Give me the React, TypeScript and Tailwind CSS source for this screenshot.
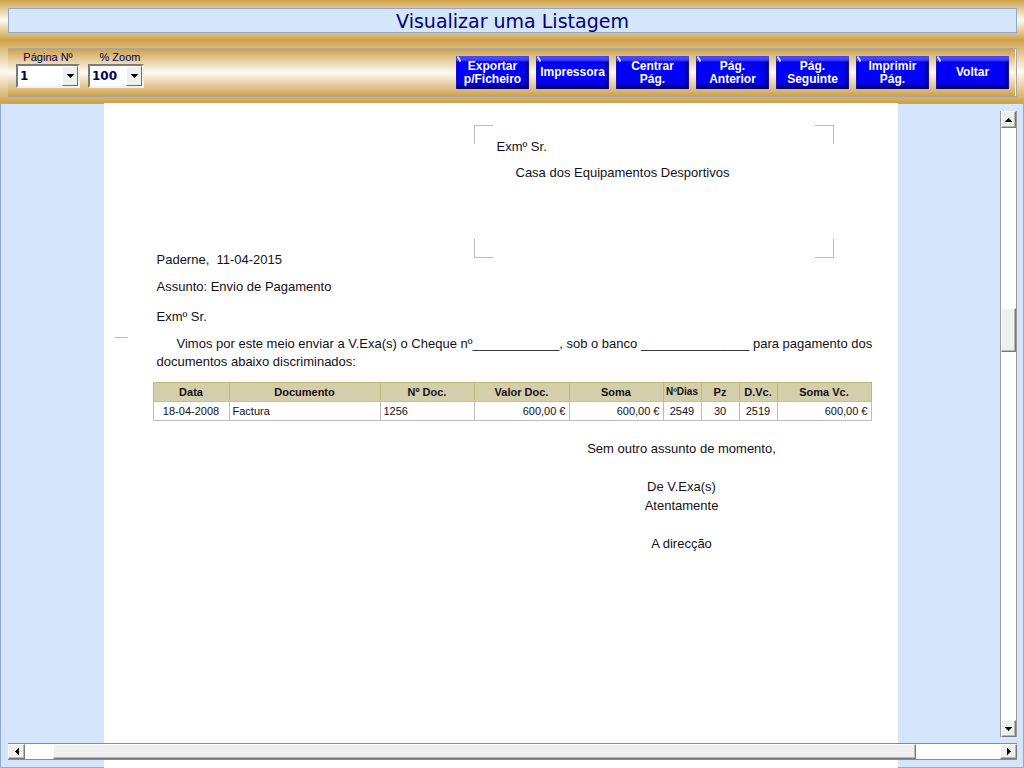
import { useState } from "react";
import clsx from "clsx";

type ToolbarAction = {
  id: string;
  lines: string[];
};

const ACTIONS: ToolbarAction[] = [
  { id: "export", lines: ["Exportar", "p/Ficheiro"] },
  { id: "printer", lines: ["Impressora"] },
  { id: "center", lines: ["Centrar", "Pág."] },
  { id: "previous", lines: ["Pág.", "Anterior"] },
  { id: "next", lines: ["Pág.", "Seguinte"] },
  { id: "print", lines: ["Imprimir", "Pág."] },
  { id: "back", lines: ["Voltar"] },
];

const COLUMNS = [
  { label: "Data", width: "w-[76px]", align: "text-center" },
  { label: "Documento", width: "w-[151px]", align: "text-left" },
  { label: "Nº Doc.", width: "w-[94px]", align: "text-left" },
  { label: "Valor Doc.", width: "w-[95px]", align: "text-right" },
  { label: "Soma", width: "w-[94px]", align: "text-right" },
  { label: "NºDias", width: "w-[38px]", align: "text-center", small: true },
  { label: "Pz", width: "w-[38px]", align: "text-center" },
  { label: "D.Vc.", width: "w-[38px]", align: "text-center" },
  { label: "Soma Vc.", width: "w-[94px]", align: "text-right" },
];

const ROWS = [
  ["18-04-2008", "Factura", "1256", "600,00 €", "600,00 €", "2549", "30", "2519", "600,00 €"],
];

const ARROWS = {
  up: "M4 0h1v1h1v1h1v1h1v1H1V3h1V2h1V1h1z",
  down: "M1 0h7v1H7v1H6v1H5v1H4V3H3V2H2V1H1z",
  left: "M4 0v7H3V6H2V5H1V4H0V3h1V2h1V1h1V0z",
  right: "M0 0h1v1h1v1h1v1h1v1H3v1H2v1H1v1H0z",
};

function Arrow({ direction }: { direction: keyof typeof ARROWS }) {
  const vertical = direction === "up" || direction === "down";
  return (
    <svg
      width={vertical ? 9 : 4}
      height={vertical ? 4 : 7}
      shapeRendering="crispEdges"
      aria-hidden="true"
    >
      <path d={ARROWS[direction]} fill="#000" />
    </svg>
  );
}

function ComboBox({
  id,
  label,
  options,
  className,
  labelClassName,
}: {
  id: string;
  label: string;
  options: string[];
  className: string;
  labelClassName?: string;
}) {
  const [value, setValue] = useState(options[0]);

  return (
    <div className={clsx("flex flex-col", className)}>
      <label
        htmlFor={id}
        className={clsx("pt-0.5 text-center text-[11px] leading-[13px] whitespace-nowrap", labelClassName)}
      >
        {label}
      </label>
      <div className="relative h-6 border-2 border-t-[#7b7b7b] border-r-[#f4f1ea] border-b-[#f4f1ea] border-l-[#7b7b7b] bg-white">
        <select
          id={id}
          value={value}
          onChange={(event) => setValue(event.target.value)}
          className="block h-full w-full appearance-none bg-transparent pl-0.5 font-['DejaVu_Sans',sans-serif] text-xs font-bold outline-none"
        >
          {options.map((option) => (
            <option key={option}>{option}</option>
          ))}
        </select>
        <span className="pointer-events-none absolute inset-y-0 right-0 flex w-4 items-center justify-center border border-t-white border-r-[#707070] border-b-[#707070] border-l-white bg-[#efefef]">
          <Arrow direction="down" />
        </span>
      </div>
    </div>
  );
}

function ToolbarButton({ lines }: { lines: string[] }) {
  return (
    <button
      type="button"
      className="relative flex h-[33px] w-[73px] flex-col items-center justify-center bg-[#0000fa] text-xs leading-[13px] font-bold text-white shadow-[inset_0_5px_2px_#4747f5,inset_-3px_-4px_3px_#000078,inset_2px_0_1px_#0000b8] active:bg-[#0000d0]"
    >
      <span className="absolute top-0 left-0.5 h-1.5 w-0.5 -rotate-30 rounded-full bg-[#d8dcff]" />
      {lines.map((line) => (
        <span key={line}>{line}</span>
      ))}
    </button>
  );
}

const BEVEL =
  "flex shrink-0 items-center justify-center border border-t-white border-r-[#7a7a7a] border-b-[#7a7a7a] border-l-white bg-[#efefef] shadow-[inset_-1px_-1px_#b5b5b5]";

function VerticalScrollbar() {
  return (
    <div className="mt-2 mr-[7px] mb-[31px] flex w-[17px] flex-col border-x border-[#9a9a9a] bg-white">
      <button type="button" aria-label="Subir" className={clsx(BEVEL, "h-[17px]")}>
        <Arrow direction="up" />
      </button>
      <div className="grow-[180]" />
      <div className={clsx(BEVEL, "h-11")} />
      <div className="grow-[368]" />
      <button type="button" aria-label="Descer" className={clsx(BEVEL, "h-[17px]")}>
        <Arrow direction="down" />
      </button>
    </div>
  );
}

function HorizontalScrollbar() {
  return (
    <div className="absolute right-[7px] bottom-2 left-2 flex h-[17px] border-y border-[#8a8a8a] bg-white">
      <button type="button" aria-label="Esquerda" className={clsx(BEVEL, "w-[17px]")}>
        <Arrow direction="left" />
      </button>
      <div className="grow-[28]" />
      <div className={clsx(BEVEL, "grow-[863]")} />
      <div className="grow-[84]" />
      <button type="button" aria-label="Direita" className={clsx(BEVEL, "w-[17px]")}>
        <Arrow direction="right" />
      </button>
    </div>
  );
}

function AddressBox() {
  return (
    <address className="relative mt-[22px] h-[133px] w-[360px] pt-[13px] pl-[23px] not-italic">
      <span className="absolute top-0 left-0 size-[19px] border-t border-l border-[#bcbcbc]" />
      <span className="absolute top-0 right-0 size-[19px] border-t border-r border-[#bcbcbc]" />
      <span className="absolute bottom-0 left-0 size-[19px] border-b border-l border-[#bcbcbc]" />
      <span className="absolute right-0 bottom-0 size-[19px] border-r border-b border-[#bcbcbc]" />
      <p>Exmº Sr.</p>
      <p className="mt-2 pl-[19px]">Casa dos Equipamentos Desportivos</p>
    </address>
  );
}

function DocumentTable() {
  return (
    <table className="mt-[11px] ml-[49px] w-[719px] table-fixed border-collapse text-[11px] leading-[18px]">
      <thead>
        <tr className="bg-[#d5ceaa]">
          {COLUMNS.map((column) => (
            <th
              key={column.label}
              className={clsx(
                "h-[19px] border border-[#bdb976] border-b-[#bcbcbc] p-0 font-bold whitespace-nowrap",
                column.width,
                column.small && "text-[10px]",
              )}
            >
              {column.label}
            </th>
          ))}
        </tr>
      </thead>
      <tbody>
        {ROWS.map((row) => (
          <tr key={row[2]}>
            {row.map((cell, index) => (
              <td
                key={COLUMNS[index].label}
                className={clsx(
                  "h-[19px] border border-[#bcbcbc] px-[3px] py-0 whitespace-nowrap",
                  COLUMNS[index].align,
                )}
              >
                {cell}
              </td>
            ))}
          </tr>
        ))}
      </tbody>
    </table>
  );
}

function Letter() {
  return (
    <article className="relative mx-auto w-[794px] shrink-0 bg-white text-[13px] leading-[18px] text-[#141018]">
      <div className="flex">
        <p className="w-[370px] self-end pl-[53px] whitespace-pre">Paderne,  11-04-2015</p>
        <div className="pb-[11px]">
          <AddressBox />
        </div>
      </div>
      <p className="mt-[9px] pl-[53px]">Assunto: Envio de Pagamento</p>
      <p className="mt-3 pl-[53px]">Exmº Sr.</p>
      <span className="absolute top-[234px] left-[11px] w-[13px] border-t border-[#bcbcbc]" />
      <p className="mt-[9px] pl-[53px] indent-5 whitespace-nowrap">
        Vimos por este meio enviar a V.Exa(s) o Cheque nº____________, sob o banco _______________ para pagamento dos
        <br />
        documentos abaixo discriminados:
      </p>
      <DocumentTable />
      <div className="mt-[18px] mr-2 ml-[370px] text-center leading-[19px]">
        <p>Sem outro assunto de momento,</p>
        <p className="mt-[19px]">De V.Exa(s)</p>
        <p>Atentamente</p>
        <p className="mt-[19px]">A direcção</p>
      </div>
    </article>
  );
}

export default function App() {
  return (
    <div className="flex h-screen flex-col overflow-hidden bg-[#d5e5fb] font-['Liberation_Sans',Arial,sans-serif] text-[#000050]">
      <header>
        <div className="h-10 bg-linear-to-b from-[#cfa246] via-[#fdfaf5] to-[#cfa246] pt-2 pr-[7px] pl-2">
          <h1 className="h-[25px] border border-[#93a7c0] bg-[#d5e5fb] text-center font-['DejaVu_Sans',Verdana,sans-serif] text-[19px] leading-6 text-[#000078]">
            Visualizar uma Listagem
          </h1>
        </div>
        <div className="bg-linear-to-b from-[#cfa246] via-[#fdfaf5] to-[#cfa246] pt-2 pr-[7px] pb-1.5 pl-2">
          <div className="flex h-[49px] items-start border-t border-r border-b border-[#aaa69b] bg-linear-to-b from-[#cfa246] via-[#fdfaf5] to-[#cfa246] pr-[7px] pl-2 shadow-[inset_-1px_0_#fbf3df]">
            <ComboBox id="pagina" label="Página Nº" options={["1"]} className="w-16" />
            <ComboBox
              id="zoom"
              label="% Zoom"
              options={["100", "75", "50"]}
              className="ml-2 w-14"
              labelClassName="pl-2"
            />
            <nav className="mt-[7px] ml-auto flex gap-[7px]">
              {ACTIONS.map((action) => (
                <ToolbarButton key={action.id} lines={action.lines} />
              ))}
            </nav>
          </div>
        </div>
      </header>

      <main className="relative flex min-h-0 flex-1">
        <div className="pointer-events-none absolute inset-0 border border-[#8fabd6]" />
        <div className="flex flex-1 pl-px">
          <Letter />
        </div>
        <VerticalScrollbar />
        <HorizontalScrollbar />
      </main>
    </div>
  );
}
